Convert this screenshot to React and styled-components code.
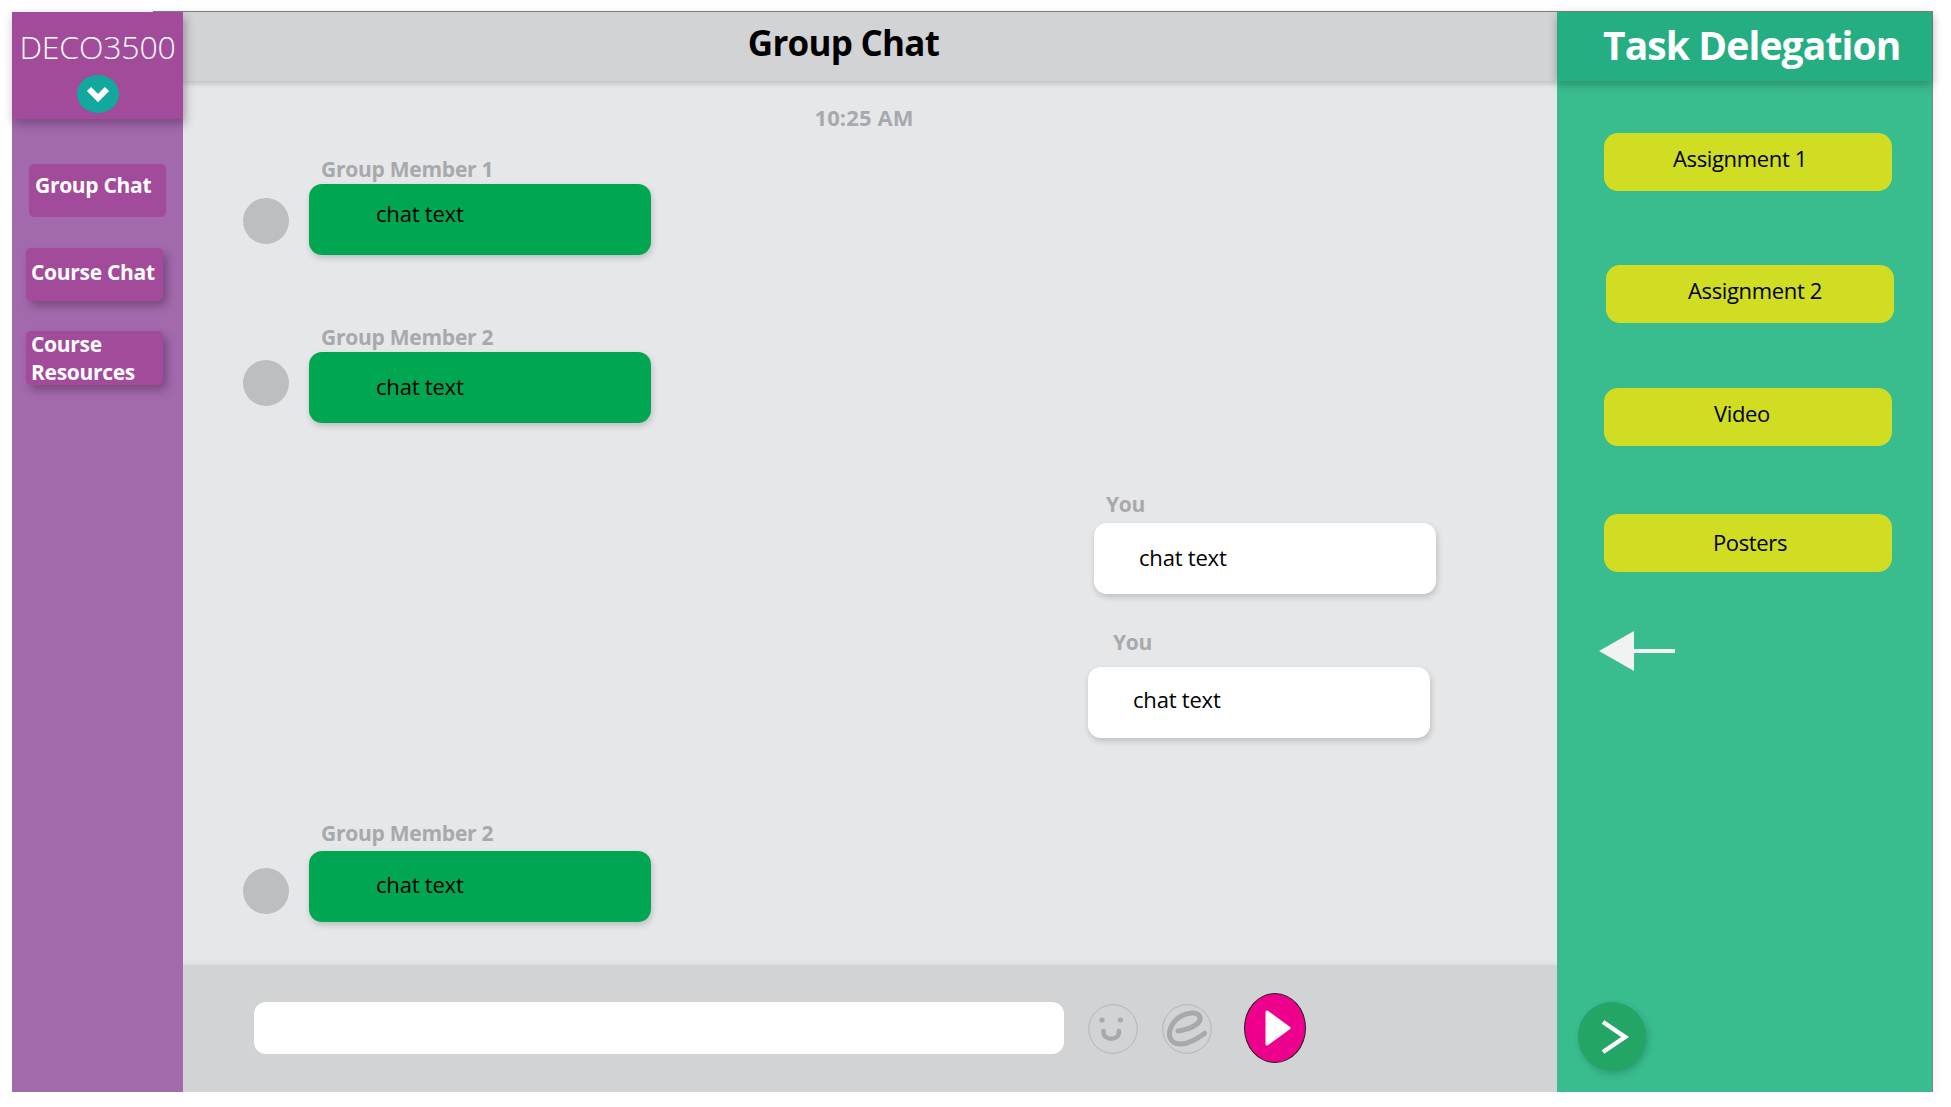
import React from "react";
import styled, { createGlobalStyle } from "styled-components";

const GlobalStyle = createGlobalStyle`
  html, body {
    margin: 0;
    padding: 0;
    background: #fff;
    font-family: "Open Sans", "Noto Sans", sans-serif;
  }
  * { box-sizing: border-box; }
`;

const Frame = styled.div`
  position: relative;
  display: grid;
  grid-template-columns: 171px 1374px 375px;
  width: 1920px;
  height: 1080px;
  margin: 12px 0 0 12px;
  /* thin outline behind the panels, starts part way along the sidebar */
  &::before {
    content: "";
    position: absolute;
    left: 141px;
    top: -1px;
    right: -1px;
    bottom: -1px;
    border: 1px solid #808285;
    box-shadow: 0 4px 10px rgba(0, 0, 0, 0.08);
  }
`;

/* left sidebar */
const Sidebar = styled.aside`
  position: relative;
  z-index: 3;
  display: flex;
  flex-direction: column;
  background: #a369ad;
`;

const CourseHeader = styled.header`
  display: flex;
  flex-direction: column;
  align-items: center;
  height: 107px;
  padding-top: 12px;
  background: #a24b9b;
  box-shadow: 2px 5px 9px rgba(60, 30, 60, 0.4);
`;

const CourseName = styled.div`
  color: #fff;
  font-size: 32px;
  font-weight: 300;
  line-height: 46px;
  letter-spacing: -0.2px;
  white-space: nowrap;
`;

const ToggleCircle = styled.div`
  display: flex;
  align-items: center;
  justify-content: center;
  width: 42px;
  height: 38px;
  margin-top: 5px;
  border-radius: 50%;
  background: #12a89d;
`;

const Nav = styled.nav`
  display: flex;
  flex-direction: column;
  padding-top: 45px;
`;

const NavButton = styled.div`
  width: 137px;
  height: ${(p) => p.$height}px;
  margin: ${(p) => p.$top}px 0 0 ${(p) => p.$left}px;
  padding: ${(p) => p.$padTop}px 0 0 ${(p) => p.$padLeft}px;
  border-radius: 5px;
  background: #a24b9b;
  color: #fff;
  font-size: 21px;
  font-weight: 700;
  line-height: 28px;
  letter-spacing: -0.3px;
  white-space: nowrap;
  box-shadow: ${(p) => (p.$raised ? "4px 5px 9px rgba(60, 30, 60, 0.4)" : "none")};
`;

const NavLines = styled.div`
  margin-top: -1px;
`;

/* middle column */
const ChatColumn = styled.main`
  position: relative;
  z-index: 1;
  display: flex;
  flex-direction: column;
  background: #e6e7e8;
`;

const ChatHeader = styled.header`
  position: relative;
  z-index: 1;
  height: 69px;
  background: #d1d3d4;
  box-shadow: 0 2px 6px rgba(0, 0, 0, 0.2);
  color: #000;
  font-size: 35px;
  font-weight: 700;
  line-height: 62px;
  letter-spacing: -0.75px;
  text-align: center;
  text-indent: -53px;
`;

const Feed = styled.section`
  flex: 1;
  display: flex;
  flex-direction: column;
`;

const TimeStamp = styled.div`
  height: 52px;
  padding-top: 21px;
  color: #a7a9ac;
  font-size: 22px;
  font-weight: 700;
  line-height: 30px;
  letter-spacing: 0.1px;
  text-align: center;
  text-indent: -12px;
`;

const MemberRow = styled.div`
  display: flex;
  margin-top: ${(p) => p.$top}px;
  padding-left: 60px;
`;

const Avatar = styled.div`
  width: 46px;
  height: 46px;
  margin: ${(p) => 28 + p.$drop}px 20px 0 0;
  border-radius: 50%;
  background: #bcbec0;
`;

const OwnRow = styled.div`
  align-self: flex-end;
  margin-top: ${(p) => p.$top}px;
  margin-right: ${(p) => p.$inset}px;
`;

/* $raise moves the text up without changing the space the label takes */
const SenderName = styled.div`
  height: 28px;
  padding-left: ${(p) => p.$indent}px;
  color: #a7a9ac;
  font-size: 21px;
  font-weight: 700;
  line-height: ${(p) => 28 - 2 * p.$raise}px;
  letter-spacing: -0.25px;
  white-space: nowrap;
`;

const Bubble = styled.div`
  display: flex;
  align-items: center;
  width: 342px;
  height: 71px;
  padding: 0 0 ${(p) => p.$lift}px ${(p) => p.$indent}px;
  border-radius: 13px;
  background: ${(p) => (p.$own ? "#fff" : "#00a651")};
  box-shadow: 1px 3px 6px rgba(0, 0, 0, 0.18);
  color: #000;
  font-size: 22px;
  letter-spacing: -0.2px;
`;

const Composer = styled.footer`
  display: flex;
  align-items: center;
  height: 127px;
  padding: 0 0 2px 71px;
  background: #d1d3d4;
  box-shadow: 0 -2px 5px rgba(0, 0, 0, 0.05);
`;

const MessageInput = styled.div`
  width: 810px;
  height: 52px;
  border-radius: 12px;
  background: #fff;
`;

const RoundIcon = styled.div`
  display: flex;
  width: 50px;
  height: 50px;
  margin: 3px 0 0 ${(p) => p.$left}px;
`;

const SendButton = styled.div`
  display: flex;
  align-items: center;
  justify-content: center;
  width: 62px;
  height: 70px;
  margin-left: 32px;
  padding-left: 5px;
  border: 1px solid #231f20;
  border-radius: 50%;
  background: #ec008c;
`;

/* right panel */
const TaskPanel = styled.aside`
  position: relative;
  z-index: 2;
  display: flex;
  flex-direction: column;
  background: #39bc8e;
`;

const TaskHeader = styled.header`
  height: 69px;
  padding-left: 46px;
  background: #25ae82;
  box-shadow: 0 3px 9px rgba(0, 0, 0, 0.28);
  color: #fff;
  font-size: 39px;
  font-weight: 700;
  line-height: 66px;
  letter-spacing: -0.9px;
  white-space: nowrap;
`;

const TaskButton = styled.div`
  display: flex;
  align-items: center;
  justify-content: center;
  width: 288px;
  height: 58px;
  margin: ${(p) => p.$top}px 0 0 ${(p) => p.$left}px;
  padding: 0 ${(p) => (p.$nudge < 0 ? -2 * p.$nudge : 0)}px ${(p) => p.$lift}px ${(p) => (p.$nudge > 0 ? 2 * p.$nudge : 0)}px;
  border-radius: 14px;
  background: #d1dd22;
  color: #000;
  font-size: 22px;
  letter-spacing: -0.35px;
`;

const BackArrow = styled.div`
  display: flex;
  width: 76px;
  height: 40px;
  margin: 59px 0 0 42px;
`;

const NextButton = styled.div`
  display: flex;
  align-items: center;
  justify-content: center;
  width: 68px;
  height: 69px;
  margin: auto 0 21px 21px;
  padding-left: 5px;
  border-radius: 50%;
  background: #23a566;
  box-shadow: 2px 3px 7px rgba(0, 0, 0, 0.18);
`;

const tasks = [
  { name: "Assignment 1", top: 52, left: 47, nudge: -8, lift: 8 },
  { name: "Assignment 2", top: 74, left: 49, nudge: 5, lift: 8 },
  { name: "Video", top: 65, left: 47, nudge: -6, lift: 8 },
  { name: "Posters", top: 68, left: 47, nudge: 2, lift: 3 },
];

const Member = ({ name, top, drop, lift, raise }) => (
  <MemberRow $top={top}>
    <Avatar $drop={drop} />
    <div>
      <SenderName $indent={12} $raise={raise}>{name}</SenderName>
      <Bubble $indent={67} $lift={lift}>chat text</Bubble>
    </div>
  </MemberRow>
);

const Own = ({ top, inset, labelIndent, lift, raise }) => (
  <OwnRow $top={top} $inset={inset}>
    <SenderName $indent={labelIndent} $raise={raise}>You</SenderName>
    <Bubble $own $indent={45} $lift={lift}>chat text</Bubble>
  </OwnRow>
);

export default function App() {
  return (
    <>
      <GlobalStyle />
      <Frame>
        <Sidebar>
          <CourseHeader>
            <CourseName>DECO3500</CourseName>
            <ToggleCircle>
              <svg width="26" height="20" viewBox="0 0 26 20">
                <path d="M4 5 L13 14 L22 5" fill="none" stroke="#fff" strokeWidth="6" />
              </svg>
            </ToggleCircle>
          </CourseHeader>
          <Nav>
            <NavButton $top={0} $left={17} $height={53} $padTop={7} $padLeft={6}>Group Chat</NavButton>
            <NavButton $raised $top={31} $left={14} $height={53} $padTop={10} $padLeft={5}>Course Chat</NavButton>
            <NavButton $raised $top={30} $left={14} $height={54} $padTop={0} $padLeft={5}>
              <NavLines>
                Course
                <br />
                Resources
              </NavLines>
            </NavButton>
          </Nav>
        </Sidebar>

        <ChatColumn>
          <ChatHeader>Group Chat</ChatHeader>
          <Feed>
            <TimeStamp>10:25 AM</TimeStamp>
            <Member name="Group Member 1" top={23} drop={14} lift={14} raise={1} />
            <Member name="Group Member 2" top={69} drop={8} lift={4} raise={1} />
            <Own top={72} inset={121} labelIndent={12} lift={3} raise={5} />
            <Own top={45} inset={127} labelIndent={25} lift={8} raise={11} />
            <Member name="Group Member 2" top={85} drop={17} lift={5} raise={4} />
          </Feed>
          <Composer>
            <MessageInput />
            <RoundIcon $left={24}>
              <svg width="50" height="50" viewBox="0 0 50 50">
                <circle cx="25" cy="25" r="24.3" fill="none" stroke="#b3b5b8" strokeWidth="1" />
                <circle cx="14" cy="16" r="2.6" fill="#a7a9ac" />
                <circle cx="32.5" cy="16" r="2.6" fill="#a7a9ac" />
                <path d="M15.5 27 L15.5 28 C15.5 37 31 37 31 28 L31 27" fill="none" stroke="#a7a9ac" strokeWidth="4.5" strokeLinecap="round" />
              </svg>
            </RoundIcon>
            <RoundIcon $left={24}>
              <svg width="50" height="50" viewBox="0 0 50 50">
                <circle cx="25" cy="25" r="24.3" fill="none" stroke="#b3b5b8" strokeWidth="1" />
                <path
                  d="M42.5 29.5 C36 34 28 40 18 40 C9 40 5 32 9 23 C13 14 24 8 32 9 C39 10 40 16 35 20 C30 24 23 26 16 27"
                  fill="none"
                  stroke="#a7a9ac"
                  strokeWidth="5"
                  strokeLinecap="round"
                />
              </svg>
            </RoundIcon>
            <SendButton>
              <svg width="28" height="38" viewBox="0 0 28 38">
                <path d="M3 3 L25 19 L3 35 Z" fill="#fff" stroke="#fff" strokeWidth="3" strokeLinejoin="round" />
              </svg>
            </SendButton>
          </Composer>
        </ChatColumn>

        <TaskPanel>
          <TaskHeader>Task Delegation</TaskHeader>
          {tasks.map((t) => (
            <TaskButton key={t.name} $top={t.top} $left={t.left} $nudge={t.nudge} $lift={t.lift}>
              {t.name}
            </TaskButton>
          ))}
          <BackArrow>
            <svg width="76" height="40" viewBox="0 0 76 40">
              <path d="M0 20 L35 0 L35 18 L76 18 L76 22 L35 22 L35 40 Z" fill="#f1f2f2" />
            </svg>
          </BackArrow>
          <NextButton>
            <svg width="30" height="36" viewBox="0 0 30 36">
              <path d="M3 3 L25 18 L3 33" fill="none" stroke="#fff" strokeWidth="4.5" />
            </svg>
          </NextButton>
        </TaskPanel>
      </Frame>
    </>
  );
}
